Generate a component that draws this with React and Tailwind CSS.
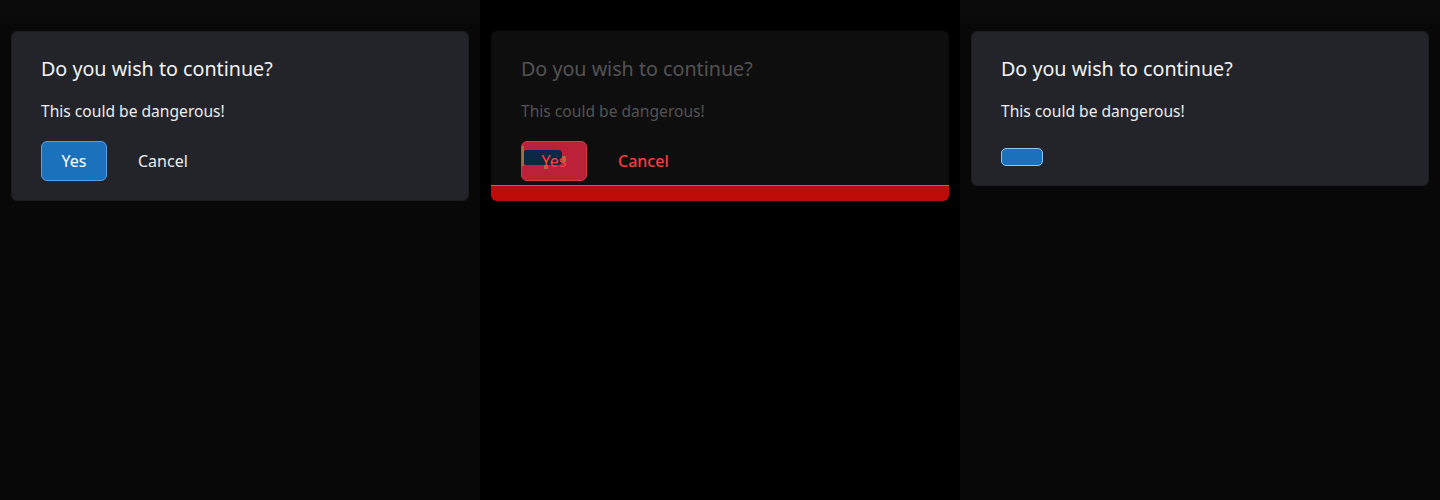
import React from "react";

const font = { fontFamily: '"Noto Sans", "Open Sans", sans-serif' };

function Title({ dim }) {
  return (
    <div className={`text-[19.7px] leading-[28px] ${dim ? "text-[#535353]" : "text-[#f2f2f2]"}`}>
      Do you wish to continue?
    </div>
  );
}

function Body({ dim }) {
  return (
    <div className={`mt-[16px] text-[15.6px] leading-[24px] ${dim ? "text-[#535353]" : "text-[#ececec]"}`}>
      This could be dangerous!
    </div>
  );
}

export default function App() {
  return (
    <div className="flex w-[1440px] h-[500px] overflow-hidden" style={font}>
      {/* Column 1 */}
      <div className="w-[480px] h-full bg-[#080808] bg-gradient-to-b from-[#0c0c0c] to-[#080808] to-[30px] px-[11px] pt-[31px]">
        <div className="rounded-[6px] bg-[#232429] border border-[#1c1d21] pl-[29px] pr-[30px] pt-[23px] pb-[19px]">
          <Title />
          <Body />
          <div className="mt-[18px] flex items-center gap-[10px] text-[16px]">
            <button className="h-[40px] w-[66px] rounded-[6px] bg-[#1c71bd] border border-[#5a9de0] text-white">
              Yes
            </button>
            <button className="h-[40px] px-[21px] text-[#ececec]">Cancel</button>
          </div>
        </div>
      </div>

      {/* Column 2 */}
      <div className="w-[480px] h-full bg-black px-[11px] pt-[31px]">
        <div className="rounded-[6px] bg-[#0e0e0e] overflow-hidden">
          <div className="pl-[30px] pr-[30px] pt-[24px] pb-[4px]">
            <Title dim />
            <Body dim />
            <div className="mt-[18px] flex items-center gap-[10px] text-[16px]">
              <button className="relative h-[40px] w-[66px] rounded-[6px] bg-[#bb2239] border border-[#dc3545] text-[#ff4040]">
                <span className="absolute left-[1px] top-[8px] w-[39px] h-[15px] rounded-[4px] bg-[#0b2947]"></span>
                <span className="absolute left-0 top-[4px] w-[2px] h-[20px] bg-[#a0703c]"></span>
                <span className="absolute left-[22px] top-[23px] w-[4px] h-[4px] bg-[#a0703c]"></span>
                <span className="absolute left-[40px] top-[14px] w-[4px] h-[6px] bg-[#a0703c]"></span>
                <span className="relative">Yes</span>
              </button>
              <button className="h-[40px] px-[21px] text-[#ff3a3a] font-medium">Cancel</button>
            </div>
          </div>
          <div className="h-[16px] bg-[#c00b0b] border-t border-[#b07030]"></div>
        </div>
      </div>

      {/* Column 3 */}
      <div className="w-[480px] h-full bg-[#080808] bg-gradient-to-b from-[#0c0c0c] to-[#080808] to-[30px] px-[11px] pt-[31px]">
        <div className="rounded-[6px] bg-[#232429] border border-[#1c1d21] pl-[29px] pr-[30px] pt-[23px] pb-[19px]">
          <Title />
          <Body />
          <div className="mt-[25px] flex">
            <div className="h-[18px] w-[42px] rounded-[5px] bg-[#1c71bd] border border-[#8cc4f2]"></div>
          </div>
        </div>
      </div>
    </div>
  );
}
